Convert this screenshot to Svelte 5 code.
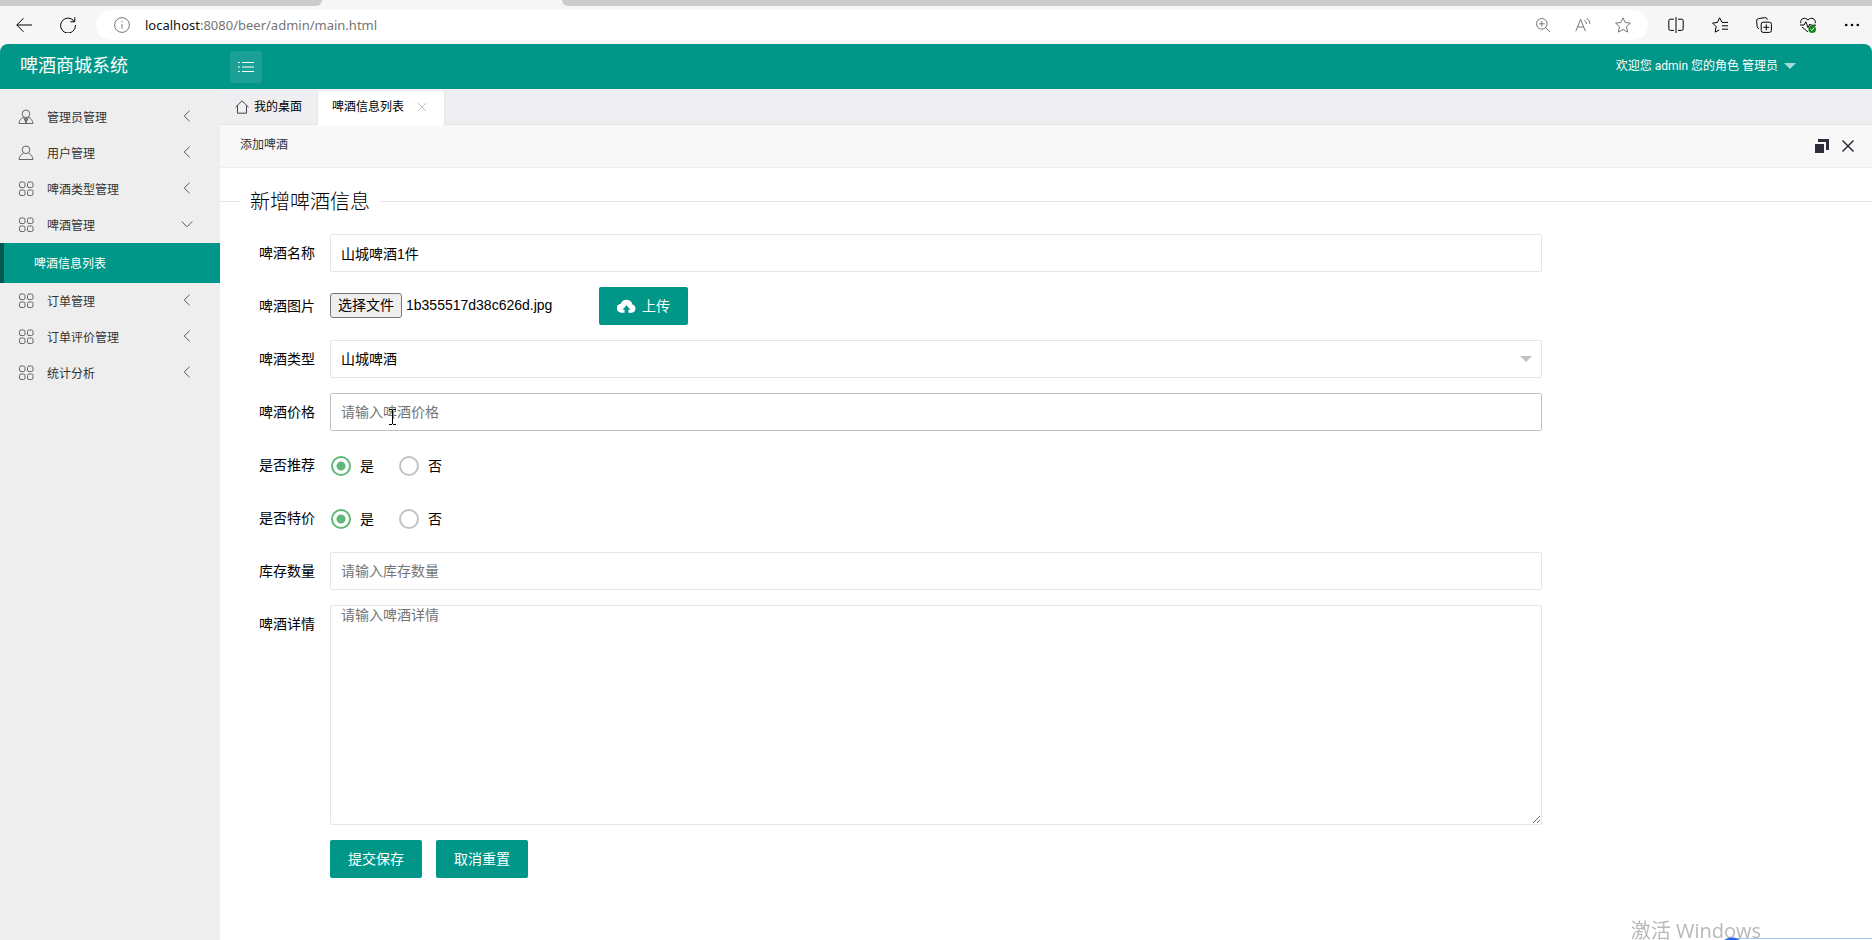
<script lang="ts">
	interface MenuItem { label: string; icon: string; open?: boolean; children?: string[]; }

	const menu: MenuItem[] = [
		{ label: '管理员管理', icon: 'admin' },
		{ label: '用户管理', icon: 'user' },
		{ label: '啤酒类型管理', icon: 'grid' },
		{ label: '啤酒管理', icon: 'grid', open: true, children: ['啤酒信息列表'] },
		{ label: '订单管理', icon: 'grid' },
		{ label: '订单评价管理', icon: 'grid' },
		{ label: '统计分析', icon: 'grid' },
	];

	const radios = [
		{ name: 'recommend', label: '是否推荐' },
		{ name: 'special', label: '是否特价' },
	];

	let beerName = $state('山城啤酒1件');
	let beerType = $state('山城啤酒');
	let price = $state('');
	let stock = $state('');
	let detail = $state('');
	let fileName = $state('1b355517d38c626d.jpg');
	let picked: Record<string, string> = $state({ recommend: '是', special: '是' });
	let fileInput: HTMLInputElement;

	function onFile() {
		const file = fileInput.files?.[0];
		if (file) fileName = file.name;
	}
</script>

<div class="window">
	<div class="tab-strip" aria-hidden="true">
		<div class="strip-left"></div>
		<div class="strip-right"></div>
	</div>

	<div class="toolbar">
		<button class="tool" aria-label="返回">
			<svg viewBox="0 0 16 16"><path d="M16 8H.8M7.5 1.2.8 8l6.700 6.800" /></svg>
		</button>
		<button class="tool reload" aria-label="刷新">
			<svg viewBox="0 0 16 16"><path d="M14.2 4.5A7.4 7.4 0 1 0 15.4 8M14.8.4v4.4h-4.4" /></svg>
		</button>
		<div class="address">
			<svg class="info" viewBox="0 0 16 16"><circle cx="8" cy="8" r="7.4" /><path d="M8 7v4.6M8 4.2v1.2" /></svg>
			<span class="url"><b>localhost</b>:8080/beer/admin/main.html</span>
			<button class="tool" aria-label="缩放">
				<svg viewBox="0 0 16 16"><circle cx="6.8" cy="6.8" r="5.3" /><path d="m10.7 10.7 4.5 4.5M4 6.8h5.6M6.8 4v5.6" /></svg>
			</button>
			<button class="tool" aria-label="朗读">
				<svg viewBox="0 0 16 16"><path d="m.8 14.2 4.8-12 4.8 12M2.4 10h6.4M9.4 3.2a5 5 0 0 1 2.2 3.8M11.6 1a8 8 0 0 1 3.4 6" /></svg>
			</button>
			<button class="tool" aria-label="收藏">
				<svg viewBox="0 0 16 16"><path d="m8 .8 2.2 4.7 5.2.6-3.9 3.5 1.1 5.5L8 12.4l-4.6 2.7 1.1-5.5L.6 6.1l5.2-.6z" /></svg>
			</button>
		</div>
		<div class="tools">
			<button class="tool" aria-label="分屏">
				<svg viewBox="0 0 16 16"><path d="M5.8 2.2H2.4Q.8 2.2.8 3.8v8q0 1.6 1.6 1.6h3.4M10 2.2h3.6q1.6 0 1.6 1.6v8q0 1.6-1.6 1.6H10M8 0v16" /></svg>
			</button>
			<button class="tool" aria-label="收藏夹">
				<svg viewBox="0 0 16 16"><path d="M10 5.4 7.6.8 5.4 5.4.6 6.1l3.5 3.5-.9 5.5L7.3 13M10 5.4h6M10 8.8h6M10 12.2h6" /></svg>
			</button>
			<button class="tool" aria-label="集锦">
				<svg viewBox="0 0 16 16"><rect x="5.2" y="5.2" width="10.2" height="10.2" rx="2" /><path d="M10.3 7.4v5.8M7.4 10.3h5.8M3 11.8A3 3 0 0 1 1.2 9.5L.6 4.2A2.400 2.400 0 0 1 2.6 1.6L8.6.7a2.400 2.400 0 0 1 2.8 1.8" /></svg>
			</button>
			<button class="tool" aria-label="浏览器概要">
				<svg viewBox="0 0 16 16"><path d="M.8 6.200C-.2 1.5 5-.4 8 3c3-3.4 8.2-1.5 7.2 3.2M0 8h4l1.8-3.2L8 10.6 9.8 7l1 1.2H16M2 10l6 5" /><circle class="ok" cx="12.2" cy="12.2" r="3.8" /><path class="tick" d="m10.6 12.4 1.2 1.1 2.2-2.6" /></svg>
			</button>
			<button class="tool" aria-label="更多">
				<svg class="dots" viewBox="0 0 16 16"><circle cx="2.2" cy="8" r="1.3" /><circle cx="8" cy="8" r="1.3" /><circle cx="13.8" cy="8" r="1.3" /></svg>
			</button>
		</div>
	</div>

	<header class="header">
		<h1 class="brand">啤酒商城系统</h1>
		<button class="toggle" aria-label="收起菜单">
			<svg viewBox="0 0 16 12"><path d="M4 1.5h12M4 6h12M4 10.5h12M0 1.5h2M0 6h2M0 10.5h2" /></svg>
		</button>
		<a class="welcome" href="#user">
			欢迎您 admin 您的角色 管理员
			<span class="triangle"></span>
		</a>
	</header>

	<div class="body">
		<nav class="sidebar">
			{#each menu as item}
				<a class="menu-item" href="#menu">
					<svg class="menu-icon" viewBox="0 0 16 16">
						{#if item.icon === 'grid'}
							<rect x="1.5" y="1" width="5.5" height="5.5" rx="1.5" />
							<rect x="9.5" y="1" width="5.5" height="5.5" rx="1.5" />
							<rect x="1.5" y="9" width="5.5" height="5.5" rx="1.5" />
							<rect x="9.5" y="9" width="5.5" height="5.5" rx="1.5" />
						{:else}
							<circle cx="8" cy="4.8" r="3.8" />
							<path d="M5.4 8.2C2.8 9.5 1.2 11.7 1 14.5h14c-.2-2.8-1.8-5-4.4-6.3" />
							{#if item.icon === 'admin'}
								<path d="M5.6 8.4 8 13.8l2.4-5.4M7 9.2h2L8 13.5z" />
							{/if}
						{/if}
					</svg>
					<span>{item.label}</span>
					<svg class="arrow" class:open={item.open} viewBox="0 0 12 12"><path d="M8.500.8 3.200 6l5.300 5.200" /></svg>
				</a>
				{#if item.open}
					{#each item.children ?? [] as child}
						<a class="sub-item" href="#beer">{child}</a>
					{/each}
				{/if}
			{/each}
		</nav>

		<main class="main">
			<div class="tabs">
				<a class="tab" href="#home">
					<svg class="home" viewBox="0 0 14 14"><path d="M.5 7.2 7 .8l6.5 6.400M2.5 5.6v7.6h9V5.6" /></svg>
					我的桌面
				</a>
				<div class="tab active">
					啤酒信息列表
					<button class="tab-close" aria-label="关闭标签">
						<svg viewBox="0 0 10 10"><path d="m1 1 8 8M9 1 1 9" /></svg>
					</button>
				</div>
			</div>

			<div class="layer-title">
				<span>添加啤酒</span>
				<button class="layer-btn" aria-label="还原">
					<svg viewBox="0 0 14 14"><path class="solid" d="M0 5h9v9H0zM3 0h11v11h-3V3H3z" /></svg>
				</button>
				<button class="layer-btn" aria-label="关闭">
					<svg viewBox="0 0 14 14"><path d="m1.5 1.5 11 11M12.5 1.5l-11 11" /></svg>
				</button>
			</div>

			<div class="legend"><h2>新增啤酒信息</h2></div>

			<form class="form" onsubmit={(e) => e.preventDefault()}>
				<div class="row">
					<label class="label" for="name">啤酒名称</label>
					<input class="input" id="name" type="text" placeholder="请输入啤酒名称" bind:value={beerName} />
				</div>

				<div class="row">
					<label class="label" for="photo">啤酒图片</label>
					<div class="file">
						<input class="file-native" id="photo" type="file" tabindex="-1" bind:this={fileInput} onchange={onFile} />
						<button class="choose" type="button" onclick={() => fileInput.click()}>选择文件</button>
						<span>{fileName}</span>
					</div>
					<button class="btn upload" type="button">
						<svg viewBox="0 0 20 14"><path d="M16.2 5.4A6.4 6.4 0 0 0 4 4.6 4.7 4.7 0 0 0 4.8 14H8v-3H5.8L10 6.2l4.2 4.8H12v3h3.6a4.4 4.4 0 0 0 .6-8.6z" /></svg>
						上传
					</button>
				</div>

				<div class="row">
					<label class="label" for="type">啤酒类型</label>
					<div class="field">
						<select class="input" id="type" bind:value={beerType}>
							<option>山城啤酒</option>
						</select>
						<span class="triangle select-arrow"></span>
					</div>
				</div>

				<div class="row">
					<label class="label" for="price">啤酒价格</label>
					<div class="field">
						<input class="input hovered" id="price" type="text" placeholder="请输入啤酒价格" bind:value={price} />
						<svg class="ibeam" viewBox="0 0 7 16"><path d="M0 .5h3M4 .5h3M3.5 1v14M0 15.5h3M4 15.5h3" /></svg>
					</div>
				</div>

				{#each radios as group}
					<div class="row" role="radiogroup" aria-label={group.label}>
						<span class="label">{group.label}</span>
						{#each ['是', '否'] as option}
							<label class="radio">
								<input type="radio" name={group.name} value={option} bind:group={picked[group.name]} />
								{option}
							</label>
						{/each}
					</div>
				{/each}

				<div class="row">
					<label class="label" for="stock">库存数量</label>
					<input class="input" id="stock" type="text" placeholder="请输入库存数量" bind:value={stock} />
				</div>

				<div class="row tall">
					<label class="label" for="detail">啤酒详情</label>
					<textarea class="input textarea" id="detail" placeholder="请输入啤酒详情" bind:value={detail}></textarea>
				</div>

				<div class="actions">
					<button class="btn" type="submit">提交保存</button>
					<button class="btn" type="reset">取消重置</button>
				</div>
			</form>
		</main>
	</div>

	<div class="watermark">激活 Windows</div>
	<div class="dock" aria-hidden="true"></div>
</div>

<style>
	:global(body) {
		overflow: hidden;
	}

	.window {
		display: flex;
		flex-direction: column;
		min-height: 100vh;
		background: #f6f6f6;
		color: #000;
		font: 14px/20px "Liberation Sans", "Noto Sans CJK SC", sans-serif;
	}

	.window * {
		box-sizing: border-box;
	}

	button, input, select, textarea {
		font: inherit;
		color: inherit;
		margin: 0;
	}

	button {
		border: 0;
		padding: 0;
		background: none;
		cursor: pointer;
	}

	a {
		color: inherit;
		text-decoration: none;
	}

	svg {
		display: block;
		fill: none;
		stroke: currentColor;
		flex: none;
	}

	/* browser chrome */
	.tab-strip {
		display: flex;
		justify-content: space-between;
		gap: 240px;
		height: 6px;
	}
	.strip-left {
		width: 322px;
		background: #ccc;
		border-bottom-right-radius: 6px;
	}
	.strip-right {
		flex: 1;
		background: #ccc;
		border-bottom-left-radius: 6px;
	}

	.toolbar {
		display: flex;
		align-items: center;
		height: 38px;
		padding: 0 12px 0 16px;
	}
	.tool svg, .info {
		width: 16px;
		height: 16px;
	}
	.reload {
		margin: 0 20px 0 28px;
	}
	.address {
		flex: 1;
		display: flex;
		align-items: center;
		gap: 24px;
		height: 30px;
		padding: 0 17px 0 18px;
		border-radius: 15px;
		background: #fff;
		color: #767676;
	}
	.url {
		flex: 1;
		margin-left: -9px;
		font: 13px/20px "Noto Sans", "Open Sans", sans-serif;
	}
	.url b {
		color: #111;
		font-weight: 400;
	}
	.tools {
		display: flex;
		gap: 28px;
		margin-left: 20px;
	}
	.tools .dots {
		fill: currentColor;
		stroke: none;
	}
	.ok {
		fill: #138a1b;
		stroke: none;
	}
	.tick {
		stroke: #fff;
	}

	/* top bar */
	.header {
		display: flex;
		align-items: center;
		height: 45px;
		padding-right: 76px;
		border-radius: 8px 8px 0 0;
		background: #009688;
		color: #fff;
	}
	.brand {
		width: 230px;
		margin: 0;
		padding: 0 0 1px 20px;
		font-size: 18px;
		line-height: 24px;
		font-weight: 400;
	}
	.toggle {
		display: grid;
		place-items: center;
		width: 32px;
		height: 32px;
		border-radius: 3px;
		background: rgba(255, 255, 255, 0.1);
	}
	.toggle svg {
		width: 16px;
		height: 12px;
	}
	.welcome {
		display: flex;
		align-items: center;
		gap: 6px;
		margin-left: auto;
		padding-bottom: 2px;
		font: 12px/20px Roboto, "Noto Sans CJK SC", sans-serif;
	}
	.triangle {
		border: 6px solid transparent;
		border-top-color: #a6dad5;
		border-bottom: 0;
	}

	.body {
		flex: 1;
		display: flex;
	}

	/* left menu */
	.sidebar {
		flex: none;
		width: 220px;
		padding-top: 10px;
		background: #eee;
		font-size: 12px;
		color: #333;
	}
	.menu-item {
		display: flex;
		align-items: center;
		height: 36px;
		padding: 0 27px 0 18px;
		gap: 13px;
	}
	.menu-item span {
		padding-top: 2px;
	}
	.menu-icon {
		width: 16px;
		height: 16px;
		stroke: #666;
	}
	.arrow {
		width: 12px;
		height: 12px;
		margin: 0 0 2px auto;
		stroke: #555;
	}
	.arrow.open {
		transform: rotate(-90deg);
	}
	.sub-item {
		display: block;
		height: 40px;
		padding-left: 30px;
		border-left: 4px solid #005a52;
		background: #009688;
		color: #fff;
		line-height: 42px;
	}

	/* tabs and popup title */
	.main {
		flex: 1;
		min-width: 0;
		background: #fff;
	}
	.tabs {
		display: flex;
		height: 36px;
		padding-top: 2px;
		background: #efeef0;
		border-bottom: 1px solid #e6e6e6;
		font-size: 12px;
	}
	.tab {
		display: flex;
		align-items: center;
		gap: 5px;
		height: 33px;
		padding: 0 15px 1px;
		border-right: 1px solid #e6e6e6;
	}
	.tab.active {
		gap: 13px;
		height: 35px;
		padding: 0 17px 3px 14px;
		background: #fff;
	}
	.home {
		width: 14px;
		height: 14px;
		stroke: #444;
	}
	.tab-close svg {
		width: 10px;
		height: 10px;
		stroke: #c2c2c2;
	}
	.layer-title {
		display: flex;
		align-items: center;
		gap: 12px;
		height: 43px;
		padding: 0 17px 0 20px;
		background: #f8f8f8;
		border-bottom: 1px solid #eee;
		color: #333;
		font-size: 12px;
	}
	.layer-title span {
		flex: 1;
		padding-bottom: 2px;
	}
	.layer-btn svg {
		width: 14px;
		height: 14px;
		stroke: #2d2c3b;
		stroke-width: 1.5;
	}
	.solid {
		fill: #2d2c3b;
		stroke: none;
	}

	.legend {
		display: flex;
		align-items: center;
		height: 66px;
	}
	.legend::before, .legend::after {
		content: '';
		width: 20px;
		height: 1px;
		background: #e6e6e6;
	}
	.legend::after {
		flex: 1;
	}
	.legend h2 {
		margin: 0;
		padding: 2px 10px 0;
		font-size: 20px;
		line-height: 28px;
		font-weight: 300;
	}

	/* form */
	.form {
		display: flex;
		flex-direction: column;
		gap: 15px;
		width: 80%;
	}
	.row {
		display: flex;
		align-items: center;
		height: 38px;
	}
	.row.tall {
		align-items: flex-start;
		height: auto;
	}
	.label {
		flex: none;
		width: 110px;
		padding: 9px 15px;
		text-align: right;
	}
	.field {
		flex: 1;
		position: relative;
	}
	.input {
		display: block;
		flex: 1;
		width: 100%;
		height: 38px;
		padding: 0 10px;
		border: 1px solid #e6e6e6;
		border-radius: 2px;
		background: #fff;
		outline: 0;
		appearance: none;
	}
	.input::placeholder {
		color: #757575;
	}
	.input.hovered, .input:hover {
		border-color: #c2c2c2;
	}
	.select-arrow {
		position: absolute;
		top: 16px;
		right: 10px;
		border-top-color: #c2c2c2;
		pointer-events: none;
	}
	.ibeam {
		position: absolute;
		top: 16px;
		left: 59px;
		width: 7px;
		height: 16px;
		stroke: #000;
		pointer-events: none;
	}
	.textarea {
		height: 220px;
		line-height: 18px;
		resize: vertical;
	}

	.file {
		display: flex;
		align-items: center;
		gap: 4px;
		width: 269px;
		padding-bottom: 2px;
	}
	.file-native {
		display: none;
	}
	.choose {
		width: 72px;
		height: 25px;
		border: 1px solid #767676;
		border-radius: 3px;
		background: #efefef;
	}

	.btn {
		height: 38px;
		padding: 0 18px;
		border-radius: 2px;
		background: #009688;
		color: #fff;
	}
	.btn:hover {
		opacity: 0.8;
	}
	.upload {
		display: flex;
		align-items: center;
		gap: 6px;
	}
	.upload svg {
		width: 19px;
		height: 14px;
		fill: #fff;
		stroke: none;
	}

	.radio {
		display: flex;
		align-items: center;
		gap: 9px;
		width: 68px;
		padding: 2px 0 0 1px;
	}
	.radio input {
		appearance: none;
		width: 20px;
		height: 20px;
		border: 2px solid #c2c2c2;
		border-radius: 50%;
		background: #fff;
	}
	.radio input:checked {
		border-color: #5fb878;
		background: radial-gradient(circle, #5fb878 4px, #fff 5px);
	}

	.actions {
		display: flex;
		gap: 14px;
		padding-left: 110px;
	}

	/* system overlay at the screen edge */
	.watermark {
		position: fixed;
		right: 111px;
		bottom: -5px;
		color: #b8b8b8;
		font: 20px/28px "Open Sans", "Noto Sans CJK SC", sans-serif;
	}
	.dock {
		position: fixed;
		right: 0;
		bottom: 0;
		width: 150px;
		height: 3px;
		background:
			radial-gradient(circle at 10px 14px, #2f66f0 13px, transparent 14px),
			linear-gradient(#a9c4ee, #a9c4ee) 14px 1px / 100% 1px no-repeat;
	}
</style>
